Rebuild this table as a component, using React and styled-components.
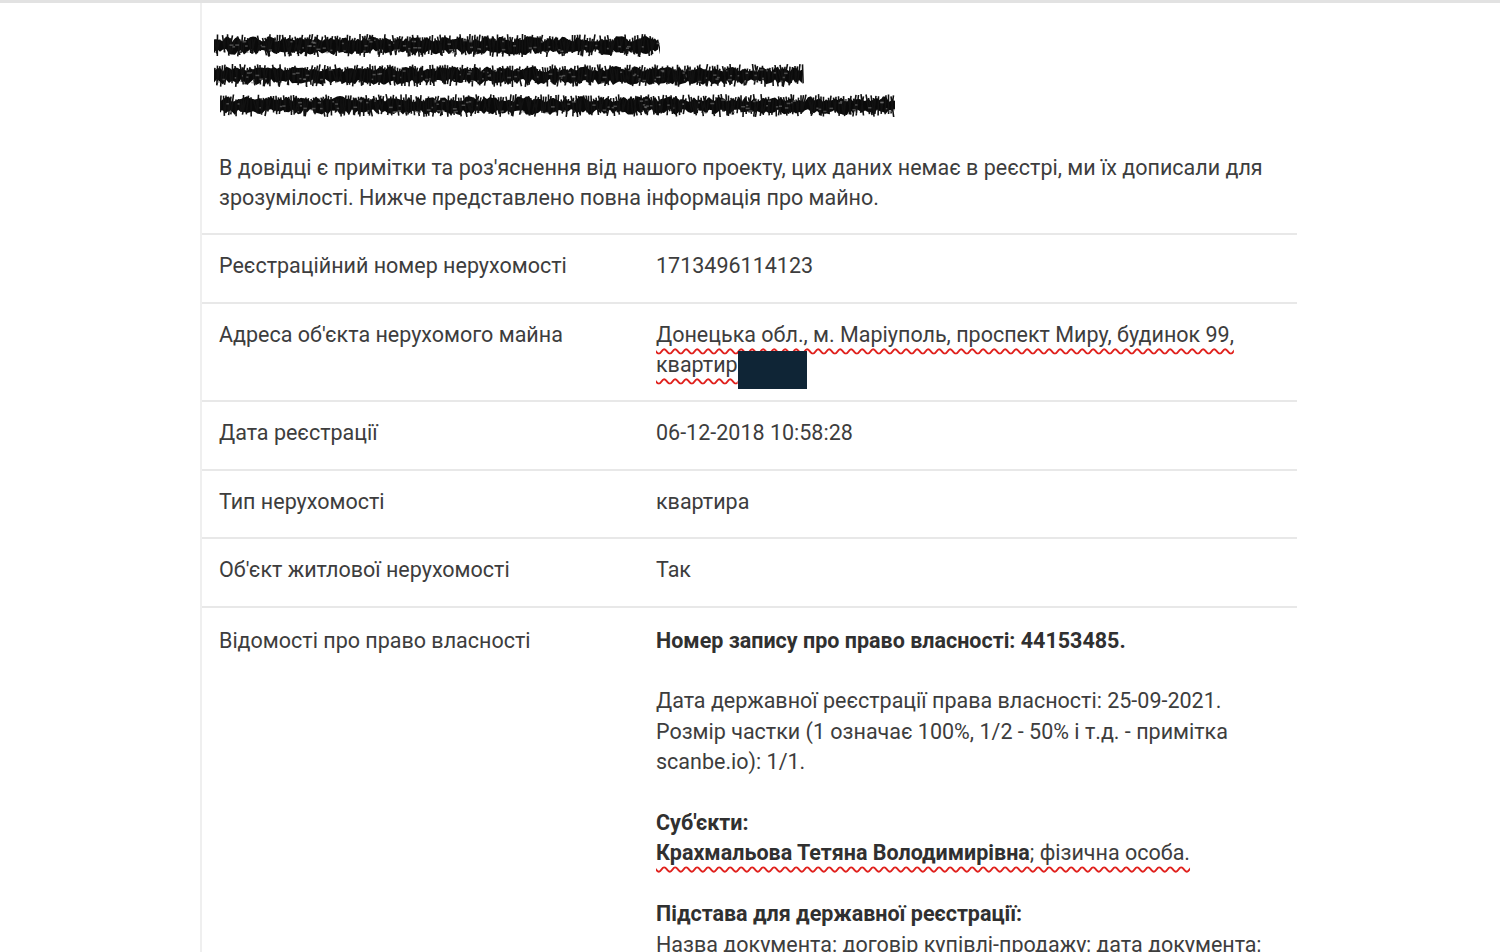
import React from "react";
import styled, { createGlobalStyle } from "styled-components";

const Global = createGlobalStyle`
  html, body { margin: 0; padding: 0; background: #ffffff; }
  body { font-family: Roboto, "Noto Sans", "Liberation Sans", sans-serif; color: #3d3d3d; }
`;

const TopRule = styled.div`
  height: 3px;
  background: #e2e2e2;
`;

const Sheet = styled.main`
  margin-left: 200px;
  width: 1095px;
  border-left: 2px solid #efefef;
  min-height: 1200px;
`;

const Intro = styled.section`
  padding: 31px 18px 20px 12px;
`;

const Redactions = styled.div`
  display: flex;
  flex-direction: column;
  gap: 7px;
`;

const Note = styled.p`
  margin: 36px 0 0 5px;
  font-size: 21.5px;
  line-height: 30px;
  color: #3d3d3d;
`;

const Row = styled.div`
  display: grid;
  grid-template-columns: 437px 1fr;
  border-top: 2px solid #e8e8e8;
  padding: ${(p) => (p.$tall ? "18px" : "16px")} 18px 20.5px 17px;
  font-size: 21.5px;
  line-height: ${(p) => (p.$tall ? "30.4px" : "30px")};
`;

const Label = styled.div`
  color: #3d3d3d;
`;

const Value = styled.div`
  color: #3d3d3d;
`;

const Para = styled.p`
  margin: 0 0 30.4px 0;
`;

const Strong = styled.b`
  font-weight: 700;
  color: #303030;
`;

const Squiggle = styled.span`
  text-decoration-line: underline;
  text-decoration-style: wavy;
  text-decoration-color: #e0201c;
  text-decoration-thickness: 2px;
  text-underline-offset: 6px;
`;

const Blackout = styled.span`
  display: inline-block;
  width: 69px;
  height: 38px;
  background: #0f2536;
  vertical-align: top;
  margin-top: 1px;
  margin-bottom: -9px;
`;

function rng(seed) {
  let s = seed;
  return () => {
    s = (s * 1103515245 + 12345) & 0x7fffffff;
    return s / 0x7fffffff;
  };
}

function Scribble({ width, height = 23, seed = 1, offset = 0 }) {
  const r = rng(seed);
  const step = 3;
  let top = [];
  let bottom = [];
  for (let x = 0; x <= width; x += step) {
    top.push(`${x},${(2 + r() * 6).toFixed(1)}`);
    bottom.push(`${x},${(height - 2 - r() * 6).toFixed(1)}`);
  }
  const poly = "M" + top.join(" L") + " L" + bottom.reverse().join(" L") + " Z";
  const strokes = [];
  for (let x = 1; x < width; x += 2.5) {
    const y1 = r() * 6;
    const y2 = height - r() * 6;
    const dx = (r() - 0.5) * 8;
    strokes.push(`M${x.toFixed(1)},${y1.toFixed(1)} L${(x + dx).toFixed(1)},${y2.toFixed(1)}`);
  }
  const specks = [];
  for (let i = 0; i < width / 6; i++) {
    specks.push(
      <rect
        key={i}
        x={(r() * width).toFixed(1)}
        y={(5 + r() * (height - 10)).toFixed(1)}
        width={(1 + r() * 3).toFixed(1)}
        height="1.5"
        fill="#777"
        opacity="0.6"
      />
    );
  }
  return (
    <svg width={width} height={height} style={{ display: "block", marginLeft: offset }}>
      <path d={poly} fill="#0a0a0a" />
      <path d={strokes.join(" ")} stroke="#111" strokeWidth="1.6" fill="none" />
      {specks}
    </svg>
  );
}

export default function App() {
  return (
    <>
      <Global />
      <TopRule />
      <Sheet>
        <Intro>
          <Redactions>
            <Scribble width={446} seed={7} offset={0} />
            <Scribble width={590} seed={13} offset={0} />
            <Scribble width={675} seed={29} offset={6} />
          </Redactions>
          <Note>
            В довідці є примітки та роз'яснення від нашого проекту, цих даних немає в реєстрі, ми їх дописали для
            <br />
            зрозумілості. Нижче представлено повна інформація про майно.
          </Note>
        </Intro>
        <Row>
          <Label>Реєстраційний номер нерухомості</Label>
          <Value>1713496114123</Value>
        </Row>
        <Row>
          <Label>Адреса об'єкта нерухомого майна</Label>
          <Value>
            <Squiggle>Донецька обл., м. Маріуполь, проспект Миру, будинок 99,</Squiggle>
            <br />
            <Squiggle>квартир</Squiggle>
            <Blackout />
          </Value>
        </Row>
        <Row>
          <Label>Дата реєстрації</Label>
          <Value>06-12-2018 10:58:28</Value>
        </Row>
        <Row>
          <Label>Тип нерухомості</Label>
          <Value>квартира</Value>
        </Row>
        <Row>
          <Label>Об'єкт житлової нерухомості</Label>
          <Value>Так</Value>
        </Row>
        <Row $tall>
          <Label>Відомості про право власності</Label>
          <Value>
            <Para>
              <Strong>Номер запису про право власності: 44153485.</Strong>
            </Para>
            <Para>
              Дата державної реєстрації права власності: 25-09-2021.
              <br />
              Розмір частки (1 означає 100%, 1/2 - 50% і т.д. - примітка
              <br />
              scanbe.io): 1/1.
            </Para>
            <Para>
              <Strong>Суб'єкти:</Strong>
              <br />
              <Squiggle>
                <Strong>Крахмальова Тетяна Володимирівна</Strong>; фізична особа.
              </Squiggle>
            </Para>
            <Para>
              <Strong>Підстава для державної реєстрації:</Strong>
              <br />
              Назва документа: договір купівлі-продажу; дата документа;
            </Para>
          </Value>
        </Row>
      </Sheet>
    </>
  );
}
